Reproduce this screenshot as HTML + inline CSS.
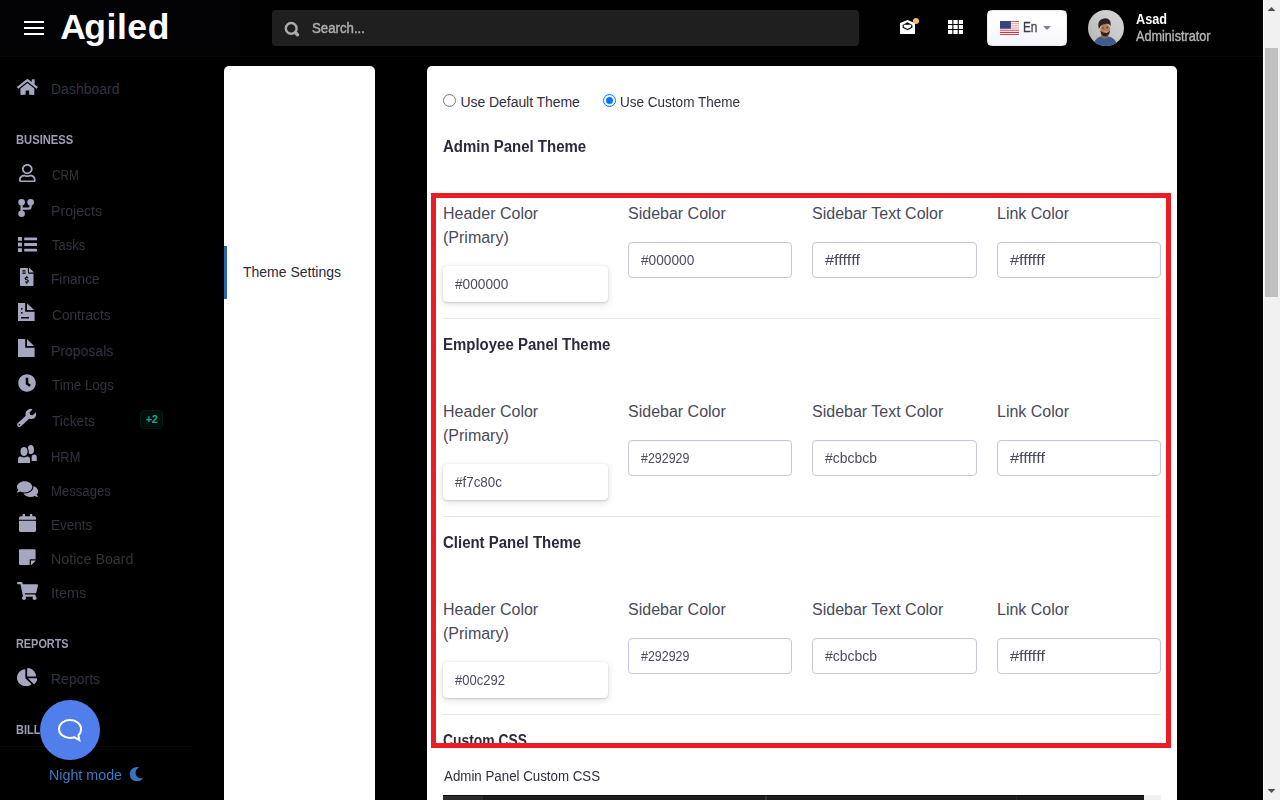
<!DOCTYPE html>
<html lang="en">
<head>
<meta charset="utf-8">
<title>Theme Settings - Agiled</title>
<style>
*{box-sizing:border-box;margin:0;padding:0}
html,body{width:1280px;height:800px;overflow:hidden;background:#000}
body{font-family:"Liberation Sans",sans-serif;font-size:14px;color:#2a2a3c;position:relative}
.abs{position:absolute}
/* ---------- header ---------- */
#hdr{position:absolute;left:0;top:0;width:1263px;height:57px;background:#010101;border-bottom:1px solid #080808}
#hdrl{position:absolute;left:0;top:0;width:240px;height:56px;background:#030305}
#burger{position:absolute;left:24px;top:21px;width:20px;height:14px}
#burger i{position:absolute;left:0;width:20px;height:2px;background:#fff}
#logo{position:absolute;left:60.300px;top:7px;font-size:35.500px;line-height:40px;font-weight:700;color:#fff;letter-spacing:.56px;white-space:nowrap}
#search{position:absolute;left:272px;top:10px;width:587px;height:36px;background:#1f1f1f;border-radius:4px}
#search span{position:absolute;left:40.300px;top:0;line-height:36px;font-size:14px;font-weight:400;color:#adadad;-webkit-text-stroke:.45px #adadad;transform:scaleX(.945);transform-origin:0 50%;white-space:nowrap}
#lang{position:absolute;left:987px;top:10px;width:80px;height:36px;background:linear-gradient(#fff 35%,#f4f5fa);border-radius:4.500px;border:1px solid #e9eaf3}
#lang .en{position:absolute;left:35.300px;top:-1px;line-height:34px;font-size:14px;color:#3c3c52;-webkit-text-stroke:.3px #3c3c52;transform:scaleX(.84);transform-origin:0 50%}
#lang .caret{position:absolute;left:54.800px;top:15px;width:0;height:0;border-left:4.250px solid transparent;border-right:4.250px solid transparent;border-top:4.600px solid #80829b}
#uname{position:absolute;left:1136px;top:10px;font-size:14px;line-height:18px;font-weight:700;color:#fff;white-space:nowrap;transform:scaleX(.905);transform-origin:0 50%}
#urole{position:absolute;left:1136px;top:26.500px;font-size:14px;line-height:18px;color:#b5b5b5;-webkit-text-stroke:.4px #b0b0b0;white-space:nowrap;transform:scaleX(.903);transform-origin:0 50%}
/* ---------- sidebar ---------- */
.nav{position:absolute;left:52px;font-size:14px;line-height:20px;color:#33333f;white-space:nowrap}
.sec{position:absolute;left:16px;font-size:12px;line-height:16px;font-weight:700;color:#9c9eb6;white-space:nowrap}
.ic{position:absolute;fill:#a4a7bf}
/* ---------- cards ---------- */
.card{position:absolute;background:#fff;border-radius:5px}
.lbl{position:absolute;font-size:16px;line-height:24px;color:#4a4a5a;white-space:nowrap}
.h{position:absolute;left:443.100px;font-size:16px;transform:scaleX(.936);transform-origin:0 50%;line-height:24px;font-weight:700;color:#2a2a3c;white-space:nowrap}
.inp{position:absolute;height:36px;border:1px solid #c6c8db;border-radius:4px;background:#fff;box-shadow:inset 0 1px 2px rgba(0,0,0,.035);font-size:14px;line-height:34px;padding-left:12px;color:#4b4d5e;white-space:nowrap}
.inp.sh{border:0;line-height:36px;padding-left:12px;box-shadow:0 2px 7px rgba(30,30,50,.14),0 1px 2px rgba(0,0,0,.12),0 0 1px rgba(0,0,0,.12)}
.hr{position:absolute;left:443px;width:718px;height:1px;background:#e6e6e8}
</style>
</head>
<body>
<!-- HEADER -->
<div id="hdr">
  <div id="hdrl"></div>
  <div id="burger"><i style="top:0"></i><i style="top:6px"></i><i style="top:12px"></i></div>
  <div id="logo"><span style="letter-spacing:-1.700px">A</span>giled</div>
  <div id="search">
    <svg class="abs" style="left:12px;top:11px" width="17" height="17" viewBox="0 0 17 17"><circle cx="7.200" cy="7.400" r="5.400" fill="none" stroke="#ababab" stroke-width="2.400"/><path d="M11.600 11.800L13.500 13.700" stroke="#ababab" stroke-width="3.400" stroke-linecap="round"/></svg>
    <span>Search...</span>
  </div>
  <!-- envelope -->
  <svg class="abs" style="left:900px;top:19.900px" width="15" height="14.200" viewBox="0 0 15 14.200"><path d="M0 3.100L7.500 0L15 3.100V14.200H0z" fill="#fff"/><path d="M2.600 5.100L7.500 2.300L12.400 5.100V7.700L7.500 10.200L2.600 7.700z" fill="#000"/><path d="M3.800 4.800H11.200V7.100L7.500 9L3.800 7.100z" fill="#fff"/></svg>
  <div class="abs" style="left:913px;top:17.900px;width:6.100px;height:6.100px;border-radius:50%;background:#f6bf66"></div>
  <!-- grid -->
  <svg class="abs" style="left:948px;top:20px" width="15.100" height="14" viewBox="0 0 15.100 14" fill="#fff"><rect x="0" y="0" width="4.300" height="4"/><rect x="5.400" y="0" width="4.300" height="4"/><rect x="10.800" y="0" width="4.300" height="4"/><rect x="0" y="5" width="4.300" height="4"/><rect x="5.400" y="5" width="4.300" height="4"/><rect x="10.800" y="5" width="4.300" height="4"/><rect x="0" y="10" width="4.300" height="4"/><rect x="5.400" y="10" width="4.300" height="4"/><rect x="10.800" y="10" width="4.300" height="4"/></svg>
  <div id="lang">
    <svg class="abs" style="left:12px;top:10px" width="19.100" height="14.200" viewBox="0 0 19.100 14.200"><rect width="19.100" height="14.200" fill="#fbf3f4"/><g fill="#d2525e"><rect y="0" width="19.100" height="1"/><rect y="2.180" width="19.100" height="1" fill="#e69aa1"/><rect y="4.370" width="19.100" height="1" fill="#e69aa1"/><rect y="6.550" width="19.100" height="1" fill="#e69aa1"/><rect y="8.740" width="19.100" height="1.100" fill="#d9626d"/><rect y="10.920" width="19.100" height="1.100" fill="#c93441"/><rect y="13.100" width="19.100" height="1.100" fill="#c93441"/></g><rect width="10.900" height="7.700" fill="#34457b"/></svg>
    <span class="en">En</span><i class="caret"></i>
  </div>
  <!-- avatar -->
  <svg class="abs" style="left:1088px;top:10px" width="36" height="36" viewBox="0 0 36 36"><defs><clipPath id="av"><circle cx="18" cy="18" r="18"/></clipPath><filter id="bl" x="-20%" y="-20%" width="140%" height="140%"><feGaussianBlur stdDeviation=".55"/></filter><linearGradient id="avg" x1="0" y1="1" x2="1" y2="0"><stop offset="0" stop-color="#b2b2b2"/><stop offset=".5" stop-color="#c9c9c9"/><stop offset="1" stop-color="#d6d6d6"/></linearGradient></defs><g clip-path="url(#av)"><rect width="36" height="36" fill="url(#avg)"/><g filter="url(#bl)"><path d="M5 37C6 30 9.500 27.300 13.500 26.300L20.500 26.500C25 27.500 28.500 30 29.500 37z" fill="#3c5b8f"/><path d="M13.300 23.500L12.800 27.300Q16.500 30 20.500 27.200L20 22z" fill="#9a6645"/><ellipse cx="17.200" cy="19.300" rx="4.700" ry="5.700" fill="#b57c57"/><path d="M12.400 20.500C12.800 24.800 15 26.400 17.300 26.400C19.600 26.400 21.700 24.600 22 20.500C20.700 22.300 19.200 22.600 17.300 22.600C15.400 22.600 13.600 22.200 12.400 20.500z" fill="#33241d"/><path d="M15.600 21.700Q18.300 23.400 20.800 21.400Q18.400 22 15.600 21.700z" fill="#f3e9e2"/><ellipse cx="15.200" cy="18" rx="1" ry=".6" fill="#4b2f22"/><ellipse cx="19.400" cy="17.700" rx="1" ry=".6" fill="#4b2f22"/><path d="M11 19C9 12.500 11.500 8.900 16.300 8.400C21 8 23.500 11 22.500 16.500C21.800 14.400 20.800 13.600 17.300 13.900C14.200 14.100 12.300 15.500 11 19z" fill="#2a2422"/></g></g></svg>
  <div id="uname">Asad</div>
  <div id="urole">Administrator</div>
</div>

<!-- SIDEBAR -->
<div id="side">
<svg class="ic" style="left:17.2px;top:78px" width="20.8" height="18" viewBox="0 0 576 512" preserveAspectRatio="none"><path d="M280.37 148.26L96 300.11V464a16 16 0 0 0 16 16l112.06-.29a16 16 0 0 0 15.92-16V368a16 16 0 0 1 16-16h64a16 16 0 0 1 16 16v95.64a16 16 0 0 0 16 16.050L464 480a16 16 0 0 0 16-16V300L295.670 148.260a12.190 12.190 0 0 0-15.300 0zM571.600 251.470L488 182.560V44.050a12 12 0 0 0-12-12h-56a12 12 0 0 0-12 12v72.610L318.470 43a48 48 0 0 0-61 0L4.340 251.470a12 12 0 0 0-1.600 16.900l25.500 31A12 12 0 0 0 45.150 301l235.220-193.740a12.190 12.190 0 0 1 15.300 0L530.900 301a12 12 0 0 0 16.900-1.600l25.500-31a12 12 0 0 0-1.700-16.930z"/></svg>
<div class="nav" style="top:79px;left:51px">Dashboard</div>
<div class="sec" style="top:132px;transform:scaleX(0.934);transform-origin:0 50%">BUSINESS</div>
<svg class="ic" style="left:19px;top:164px" width="16.6" height="18.1" viewBox="0 0 448 512" preserveAspectRatio="none"><path d="M313.600 304c-28.700 0-42.500 16-89.600 16-47.100 0-60.800-16-89.600-16C60.200 304 0 364.200 0 438.400V464c0 26.500 21.500 48 48 48h352c26.500 0 48-21.500 48-48v-25.600c0-74.200-60.200-134.400-134.400-134.400zM400 464H48v-25.600c0-47.600 38.800-86.400 86.400-86.400 14.600 0 38.300 16 89.600 16 51.700 0 74.900-16 89.600-16 47.600 0 86.400 38.800 86.400 86.400V464zM224 288c79.500 0 144-64.500 144-144S303.500 0 224 0 80 64.500 80 144s64.500 144 144 144zm0-240c52.900 0 96 43.100 96 96s-43.100 96-96 96-96-43.100-96-96 43.100-96 96-96z"/></svg>
<div class="nav" style="top:165px;left:52px;transform:scaleX(0.84);transform-origin:0 50%">CRM</div>
<svg class="ic" style="left:18px;top:199px" width="17" height="18" viewBox="0 0 17 18"><circle cx="3.600" cy="3.300" r="3.300"/><circle cx="12.600" cy="3.300" r="3.300"/><circle cx="3.600" cy="14.700" r="3.300"/><path d="M3.600 3.300V14.700M12.600 3.300V7.400Q12.600 9.600 10.400 9.600H3.600" fill="none" stroke="#a4a7bf" stroke-width="2.200"/></svg>
<div class="nav" style="top:201px;left:51px;transform:scaleX(1.01);transform-origin:0 50%">Projects</div>
<svg class="ic" style="left:18px;top:237px" width="19" height="15" viewBox="0 0 19 15"><rect x="0" y="0" width="3.900" height="3.800"/><rect x="0" y="5.600" width="3.900" height="3.800"/><rect x="0" y="11.200" width="3.900" height="3.800"/><rect x="6.200" y=".5" width="12.800" height="2.800" rx=".5"/><rect x="6.200" y="6.100" width="12.800" height="2.800" rx=".5"/><rect x="6.200" y="11.700" width="12.800" height="2.800" rx=".5"/></svg>
<div class="nav" style="top:235px;left:52px;transform:scaleX(0.925);transform-origin:0 50%">Tasks</div>
<svg class="ic" style="left:20.4px;top:268px" width="13.5" height="18" viewBox="0 0 384 512"><path d="M377 105L279.100 7c-4.500-4.500-10.600-7-17-7H256v128h128v-6.100c0-6.300-2.500-12.400-7-16.900zm-153 31V0H24C10.700 0 0 10.700 0 24v464c0 13.300 10.700 24 24 24h336c13.300 0 24-10.700 24-24V160H248c-13.200 0-24-10.800-24-24zM64 72c0-4.420 3.580-8 8-8h80c4.420 0 8 3.580 8 8v16c0 4.420-3.580 8-8 8H72c-4.420 0-8-3.580-8-8V72zm0 80v-16c0-4.420 3.580-8 8-8h80c4.420 0 8 3.580 8 8v16c0 4.420-3.580 8-8 8H72c-4.420 0-8-3.580-8-8zm144 263.880V440c0 4.420-3.580 8-8 8h-16c-4.420 0-8-3.580-8-8v-24.290c-11.290-.58-22.270-4.520-31.370-11.350-3.900-2.930-4.100-8.770-.57-12.140l11.750-11.210c2.770-2.640 6.890-2.760 10.130-.73 3.870 2.420 8.260 3.720 12.820 3.720h28.110c6.500 0 11.800-5.920 11.800-13.190 0-5.950-3.610-11.190-8.770-12.730l-45-13.500c-18.590-5.580-31.580-23.420-31.580-43.390 0-24.520 19.050-44.440 42.670-45.070V232c0-4.420 3.580-8 8-8h16c4.420 0 8 3.580 8 8v24.290c11.290.58 22.270 4.510 31.370 11.350 3.900 2.930 4.100 8.770.57 12.140l-11.750 11.210c-2.770 2.640-6.890 2.760-10.130.73-3.870-2.430-8.260-3.720-12.820-3.720h-28.110c-6.500 0-11.800 5.920-11.800 13.190 0 5.950 3.610 11.190 8.770 12.730l45 13.500c18.590 5.580 31.580 23.420 31.580 43.390 0 24.530-19.050 44.440-42.670 45.070z"/></svg>
<div class="nav" style="top:269px;left:51px;transform:scaleX(0.977);transform-origin:0 50%">Finance</div>
<svg class="ic" style="left:18px;top:303px" width="16.600" height="18" viewBox="0 0 16.600 18"><path d="M0 0H7.200V8.800H16.600V18H0z"/><path d="M9 .2V7H16.200z"/><g fill="#000"><circle cx="3.800" cy="5.800" r=".9"/><circle cx="3.800" cy="9.800" r=".9"/><rect x="3" y="14" width="8" height="1.600" rx=".4"/></g></svg>
<div class="nav" style="top:305px;left:52px;transform:scaleX(0.977);transform-origin:0 50%">Contracts</div>
<svg class="ic" style="left:18px;top:339px" width="16.600" height="18" viewBox="0 0 16.600 18"><path d="M0 0H7.200V8.800H16.600V18H0z"/><path d="M9 .2V7H16.200z"/></svg>
<div class="nav" style="top:341px;left:51px">Proposals</div>
<svg class="ic" style="left:18.3px;top:374px" width="18" height="18" viewBox="0 0 512 512"><path d="M256 8C119 8 8 119 8 256s111 248 248 248 248-111 248-248S393 8 256 8zm57.100 350.100L224.900 294c-3.100-2.300-4.900-5.900-4.900-9.700V116c0-6.600 5.400-12 12-12h48c6.600 0 12 5.400 12 12v137.700l63.500 46.200c5.400 3.900 6.500 11.400 2.600 16.800l-28.200 38.800c-3.900 5.300-11.400 6.500-16.800 2.600z"/></svg>
<div class="nav" style="top:375px;left:52px;transform:scaleX(0.954);transform-origin:0 50%">Time Logs</div>
<svg class="ic" style="left:16.9px;top:409px" width="19.3" height="18" viewBox="0 0 512 512" preserveAspectRatio="none"><path d="M507.730 109.100c-2.240-9.030-13.540-12.090-20.120-5.510l-74.360 74.360-67.880-11.310-11.310-67.880 74.360-74.360c6.620-6.620 3.430-17.900-5.660-20.160-47.380-11.740-99.550.91-136.580 37.930-39.640 39.640-50.550 97.100-34.050 147.200L18.740 402.760c-24.990 24.990-24.990 65.510 0 90.500 24.990 24.990 65.510 24.990 90.500 0l213.210-213.210c50.120 16.710 107.470 5.680 147.370-34.220 37.070-37.070 49.700-89.320 37.910-136.730zM64 472c-13.250 0-24-10.750-24-24 0-13.260 10.750-24 24-24s24 10.740 24 24c0 13.250-10.750 24-24 24z"/></svg>
<div class="nav" style="top:411px;left:52px;transform:scaleX(0.977);transform-origin:0 50%">Tickets</div>
<div class="abs" style="left:140px;top:410px;width:23px;height:19px;border-radius:4px;background:#010e0b;border:1px solid #021a14;color:#14a98b;font-size:11px;font-weight:700;line-height:17px;text-align:center;letter-spacing:-.4px">+2</div>
<svg class="ic" style="left:17px;top:444px" width="21" height="20" viewBox="0 0 21 20"><ellipse cx="13.800" cy="5.600" rx="3.200" ry="4.600"/><path d="M14.600 17V13.200Q14.600 10.600 17.200 10.600Q19.800 10.600 19.800 13.200V17z"/><path d="M1 19V15Q1 12.600 3.400 12.600H10.600Q13 12.600 13 15V19z" stroke="#000" stroke-width="2" paint-order="stroke"/><rect x="0" y="19" width="21" height="2" fill="#000"/><ellipse cx="7" cy="7.600" rx="4.800" ry="5.800" fill="#000"/><ellipse cx="7" cy="7.600" rx="3.600" ry="4.600"/></svg>
<div class="nav" style="top:447px;left:51px;transform:scaleX(0.923);transform-origin:0 50%">HRM</div>
<svg class="ic" style="left:16.9px;top:479.7px" width="21.1" height="18" viewBox="0 0 576 512" preserveAspectRatio="none"><path d="M416 192c0-88.400-93.100-160-208-160S0 103.600 0 192c0 34.300 14.100 65.900 38 92-13.400 30.200-35.500 54.200-35.800 54.500-2.200 2.300-2.800 5.700-1.500 8.700S4.800 352 8 352c36.600 0 66.900-12.300 88.700-25 32.200 15.700 70.300 25 111.300 25 114.900 0 208-71.600 208-160zm122 220c23.900-26 38-57.700 38-92 0-66.900-53.500-124.200-129.300-148.100.9 6.600 1.300 13.300 1.300 20.100 0 105.900-107.700 192-240 192-10.800 0-21.300-.8-31.700-1.900C207.800 439.600 281.800 480 368 480c41 0 79.100-9.200 111.300-25 21.800 12.700 52.100 25 88.700 25 3.200 0 6.100-1.900 7.300-4.900 1.300-3 .7-6.400-1.500-8.700-.3-.3-22.400-24.200-35.800-54.400z"/></svg>
<div class="nav" style="top:481px;left:51px;transform:scaleX(0.937);transform-origin:0 50%">Messages</div>
<svg class="ic" style="left:19px;top:514px" width="17" height="18.3" viewBox="0 0 448 512" preserveAspectRatio="none"><path d="M12 192h424c6.600 0 12 5.400 12 12v260c0 26.500-21.500 48-48 48H48c-26.500 0-48-21.500-48-48V204c0-6.600 5.400-12 12-12zm436-44v-36c0-26.500-21.500-48-48-48h-48V12c0-6.600-5.400-12-12-12h-40c-6.600 0-12 5.400-12 12v52H160V12c0-6.600-5.400-12-12-12h-40c-6.600 0-12 5.400-12 12v52H48C21.500 64 0 85.500 0 112v36c0 6.600 5.400 12 12 12h424c6.600 0 12-5.400 12-12z"/></svg>
<div class="nav" style="top:515px;left:51px;transform:scaleX(0.964);transform-origin:0 50%">Events</div>
<svg class="ic" style="left:19px;top:548px" width="16.6" height="18" viewBox="0 0 448 512" preserveAspectRatio="none"><path d="M312 320h136V56c0-13.300-10.700-24-24-24H24C10.700 32 0 42.700 0 56v400c0 13.300 10.700 24 24 24h264V344c0-13.200 10.800-24 24-24zm129 55l-98 98c-4.500 4.500-10.600 7-17 7h-6V352h128v6.100c0 6.300-2.500 12.400-7 16.900z"/></svg>
<div class="nav" style="top:549px;left:51px;transform:scaleX(1.019);transform-origin:0 50%">Notice Board</div>
<svg class="ic" style="left:16.9px;top:582px" width="21.1" height="18" viewBox="0 0 576 512" preserveAspectRatio="none"><path d="M528.120 301.319l47.273-208C578.806 78.301 567.391 64 551.990 64H159.208l-9.166-44.810C147.758 8.021 137.930 0 126.529 0H24C10.745 0 0 10.745 0 24v16c0 13.255 10.745 24 24 24h69.883l70.248 343.435C147.325 417.100 136 435.222 136 456c0 30.928 25.072 56 56 56s56-25.072 56-56c0-15.674-6.447-29.835-16.824-40h209.647C430.447 426.165 424 440.326 424 456c0 30.928 25.072 56 56 56s56-25.072 56-56c0-22.172-12.888-41.332-31.579-50.405l5.517-24.276c3.413-15.018-8.002-29.319-23.403-29.319H218.117l-6.545-32h293.145c11.206 0 20.920-7.754 23.403-18.681z"/></svg>
<div class="nav" style="top:583px;left:51px;transform:scaleX(1.03);transform-origin:0 50%">Items</div>
<div class="sec" style="top:636px;transform:scaleX(0.907);transform-origin:0 50%">REPORTS</div>
<svg class="ic" style="left:17.2px;top:668px" width="20.3" height="18.3" viewBox="0 0 544 512" preserveAspectRatio="none"><path d="M527.790 288H290.500l158.030 158.030c6.040 6.040 15.980 6.530 22.190.68 38.700-36.460 65.320-85.610 73.130-140.860 1.340-9.460-6.510-17.850-16.060-17.850zm-15.830-64.800C503.720 103.740 408.260 8.280 288.800.04 279.680-.59 272 7.100 272 16.240V240h223.770c9.140 0 16.820-7.680 16.190-16.800zM224 288V50.710c0-9.550-8.390-17.400-17.840-16.060C86.990 51.490-4.100 155.600.14 280.370 4.500 408.510 114.830 513.590 243.030 511.980c50.400-.63 96.970-16.870 135.260-44.030 7.900-5.600 8.420-17.230 1.570-24.080L224 288z"/></svg>
<div class="nav" style="top:669px;left:51px">Reports</div>
<div class="sec" style="top:722px;transform:scaleX(0.92);transform-origin:0 50%">BILLING</div>
<div class="abs" style="left:0;top:746px;width:192px;height:1px;background:#0a0a0a"></div>
<div class="abs" style="left:0;top:747px;width:192px;height:53px;background:#000"></div>
<div class="abs" id="nm" style="left:48.500px;top:765px;transform:scaleX(1.02);transform-origin:0 50%;font-size:14px;line-height:20px;color:#3b7bc6;white-space:nowrap">Night mode</div>
<svg class="abs" style="left:129px;top:766.700px" width="14.500" height="14.500" viewBox="0 0 512 512"><path fill="#3674c2" d="M283.211 512c78.962 0 151.079-35.925 198.857-94.792 7.068-8.708-.639-21.430-11.562-19.350-124.203 23.654-238.262-71.576-238.262-196.954 0-72.222 38.662-138.635 101.498-174.394 9.686-5.512 7.250-20.197-3.756-22.230A258.156 258.156 0 0 0 283.211 0c-141.309 0-256 114.511-256 256 0 141.309 114.511 256 256 256z"/></svg>
<div class="abs" style="left:40px;top:700px;width:60px;height:60px;border-radius:50%;background:#507eea"></div>
<svg class="abs" style="left:56px;top:717px" width="28" height="27" viewBox="0 0 28 27"><path d="M14 3.100C20.500 3.100 25.100 7 25.100 12C25.100 14.600 24 16.900 22.400 18.500L23.300 23L18.500 20.300C17.100 20.700 15.600 20.900 14 20.900C7.500 20.900 3 17 3 12C3 7 7.500 3.100 14 3.100z" fill="none" stroke="#fff" stroke-width="2" stroke-linejoin="miter"/></svg>
</div>

<!-- LEFT CARD -->
<div class="card" style="left:224px;top:66px;width:151px;height:760px"></div>
<div class="abs" style="left:224px;top:246px;width:3px;height:53px;background:#2f66b3"></div>
<div class="abs" id="ts" style="left:243px;top:262px;font-size:14px;line-height:20px;color:#2a2a3c;white-space:nowrap">Theme Settings</div>

<!-- MAIN CARD -->
<div class="card" style="left:427px;top:66px;width:750px;height:760px"></div>
<div id="main">
<div class="abs" style="left:443px;top:94px;width:13px;height:13px;border-radius:50%;border:1px solid #767676;background:#fff"></div>
<div class="abs rt" id="r1" style="left:460.500px;top:92px;font-size:14px;line-height:20px;color:#2f2f40;white-space:nowrap;letter-spacing:-.06px">Use Default Theme</div>
<div class="abs" style="left:603px;top:94px;width:13px;height:13px;border-radius:50%;border:1px solid #0075ff;background:#fff"><i style="position:absolute;left:2px;top:2px;width:7px;height:7px;border-radius:50%;background:#0075ff"></i></div>
<div class="abs rt" id="r2" style="left:619.800px;top:92px;font-size:14px;line-height:20px;color:#2f2f40;white-space:nowrap;transform:scaleX(.966);transform-origin:0 50%">Use Custom Theme</div>
<div class="h" style="top:134.5px">Admin Panel Theme</div>
<div class="lbl" style="left:443px;top:202px">Header Color<br>(Primary)</div>
<div class="inp sh" style="left:443px;top:265.6px;width:165.300px;height:36.400px"><span style="display:inline-block;transform:scaleX(0.978);transform-origin:0 50%">#000000</span></div>
<div class="lbl" style="left:628px;top:202px">Sidebar Color</div>
<div class="inp" style="left:628px;top:242px;width:164px"><span style="display:inline-block;transform:scaleX(0.978);transform-origin:0 50%">#000000</span></div>
<div class="lbl" style="left:812px;top:202px">Sidebar Text Color</div>
<div class="inp" style="left:812px;top:242px;width:165px"><span style="display:inline-block;transform:scaleX(1.17);transform-origin:0 50%">#ffffff</span></div>
<div class="lbl" style="left:997px;top:202px">Link Color</div>
<div class="inp" style="left:997px;top:242px;width:164px"><span style="display:inline-block;transform:scaleX(1.17);transform-origin:0 50%">#ffffff</span></div>
<div class="hr" style="top:318px"></div>
<div class="h" style="top:332.5px">Employee Panel Theme</div>
<div class="lbl" style="left:443px;top:400px">Header Color<br>(Primary)</div>
<div class="inp sh" style="left:443px;top:463.6px;width:165.300px;height:36.400px"><span style="display:inline-block;transform:scaleX(0.958);transform-origin:0 50%">#f7c80c</span></div>
<div class="lbl" style="left:628px;top:400px">Sidebar Color</div>
<div class="inp" style="left:628px;top:440px;width:164px"><span style="display:inline-block;transform:scaleX(0.887);transform-origin:0 50%">#292929</span></div>
<div class="lbl" style="left:812px;top:400px">Sidebar Text Color</div>
<div class="inp" style="left:812px;top:440px;width:165px"><span style="display:inline-block;transform:scaleX(0.995);transform-origin:0 50%">#cbcbcb</span></div>
<div class="lbl" style="left:997px;top:400px">Link Color</div>
<div class="inp" style="left:997px;top:440px;width:164px"><span style="display:inline-block;transform:scaleX(1.17);transform-origin:0 50%">#ffffff</span></div>
<div class="hr" style="top:516px"></div>
<div class="h" style="top:530.5px">Client Panel Theme</div>
<div class="lbl" style="left:443px;top:598px">Header Color<br>(Primary)</div>
<div class="inp sh" style="left:443px;top:661.6px;width:165.300px;height:36.400px"><span style="display:inline-block;transform:scaleX(0.93);transform-origin:0 50%">#00c292</span></div>
<div class="lbl" style="left:628px;top:598px">Sidebar Color</div>
<div class="inp" style="left:628px;top:638px;width:164px"><span style="display:inline-block;transform:scaleX(0.887);transform-origin:0 50%">#292929</span></div>
<div class="lbl" style="left:812px;top:598px">Sidebar Text Color</div>
<div class="inp" style="left:812px;top:638px;width:165px"><span style="display:inline-block;transform:scaleX(0.995);transform-origin:0 50%">#cbcbcb</span></div>
<div class="lbl" style="left:997px;top:598px">Link Color</div>
<div class="inp" style="left:997px;top:638px;width:164px"><span style="display:inline-block;transform:scaleX(1.17);transform-origin:0 50%">#ffffff</span></div>
<div class="hr" style="top:714px"></div>
<div class="h" style="top:728.5px;transform:scaleX(.866)">Custom CSS</div>
<div class="abs" style="left:431px;top:193px;width:740px;height:555px;border:5px solid #ec1c24"></div>
<div class="abs" style="left:427px;top:748px;width:750px;height:52px;background:#fff"></div>
<div class="abs" id="apc" style="left:443.500px;top:766px;font-size:14px;line-height:20px;color:#2f2f40;white-space:nowrap;transform:scaleX(.951);transform-origin:0 50%">Admin Panel Custom CSS</div>
<div class="abs" style="left:443px;top:795px;width:701px;height:5px;background:#1c1c1c;border-top:1px solid #0b0b0b"></div>
<div class="abs" style="left:443px;top:796px;width:40px;height:4px;background:#2b2b2b"></div>
<div class="abs" style="left:765px;top:796px;width:2px;height:4px;background:#333"></div>
<div class="abs" style="left:1016px;top:796px;width:1px;height:4px;background:#282828"></div>
<div class="abs" style="left:1144px;top:795px;width:17px;height:5px;background:#f1f1f1"></div>
</div>

<!-- page scrollbar -->
<div class="abs" style="left:1263px;top:0;width:17px;height:800px;background:#f1f1f1;border-left:1px solid #fff"></div>
<div class="abs" style="left:1265px;top:48px;width:13px;height:249px;background:#c1c1c1"></div>
<svg class="abs" style="left:1263px;top:0" width="17" height="17" viewBox="0 0 17 17"><path d="M4.600 11L8.500 7l3.900 4z" fill="#505050"/></svg>
<svg class="abs" style="left:1263px;top:783px" width="17" height="17" viewBox="0 0 17 17"><path d="M4.600 6L8.500 10l3.900-4z" fill="#505050"/></svg>
</body>
</html>
